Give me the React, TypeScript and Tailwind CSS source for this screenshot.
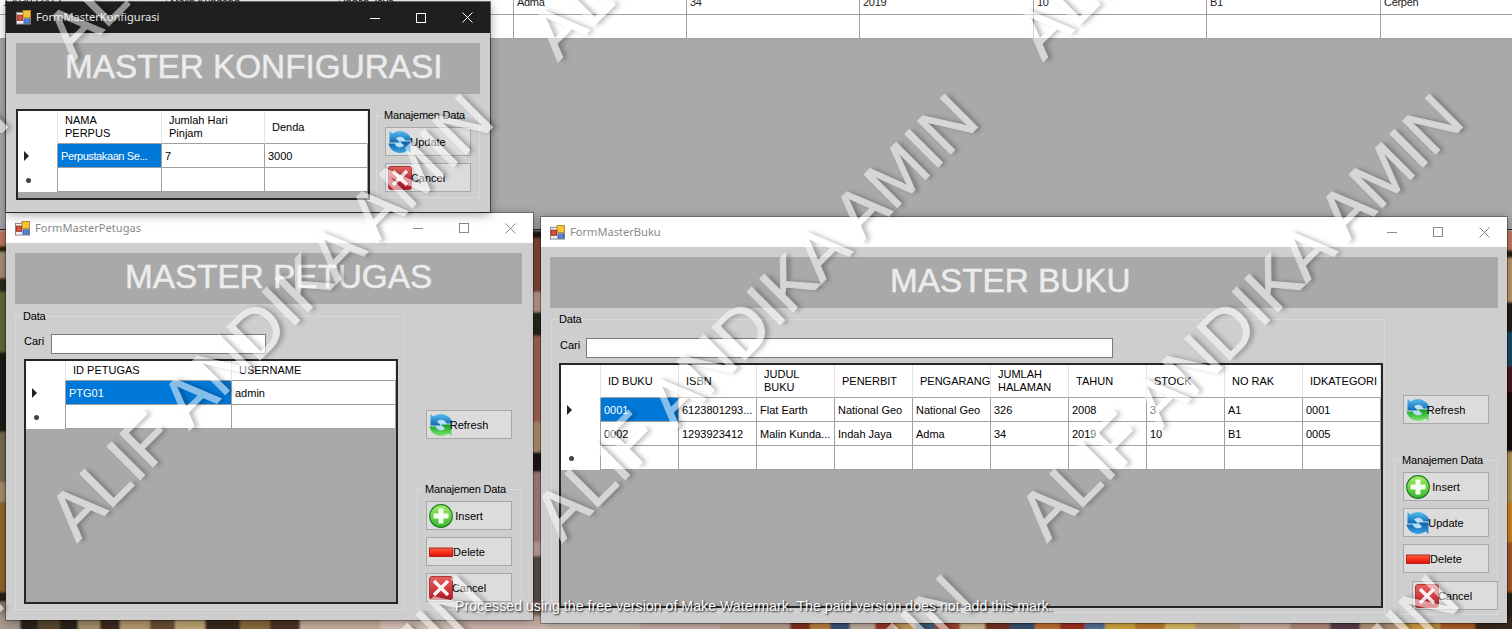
import React from 'react'

const shelf: [number, number, string][] = [
  [0, 20, '#a89c90'], [20, 38, '#2a211c'], [38, 60, '#5c4632'], [60, 78, '#2c221c'], [78, 100, '#a8906c'],
  [100, 120, '#3a2c22'], [120, 150, '#b89a70'], [150, 175, '#6a4e34'], [175, 205, '#c2a878'], [205, 240, '#3a2a1e'],
  [240, 270, '#8c6c3c'], [270, 300, '#4a3626'], [300, 380, '#c8b0a0'], [380, 460, '#d8c4b8'], [460, 540, '#cdb6aa'],
  [540, 640, '#d8c4b6'], [640, 720, '#cfb8ac'], [720, 790, '#c4a898'], [790, 810, '#8c3020'], [810, 830, '#c88840'],
  [830, 850, '#40587c'], [850, 875, '#c8b8a8'], [875, 895, '#a03828'], [895, 915, '#d8a860'], [915, 935, '#4a6888'],
  [935, 960, '#b04830'], [960, 985, '#e0c8a0'], [985, 1010, '#7a3428'], [1010, 1035, '#3c5474'], [1035, 1060, '#c87838'],
  [1060, 1085, '#a83020'], [1085, 1105, '#5878a0'], [1105, 1135, '#e0b040'], [1135, 1165, '#c88430'], [1165, 1195, '#e8c868'],
  [1195, 1240, '#c8a888'], [1240, 1290, '#d8b8a8'], [1290, 1330, '#b89080'], [1330, 1360, '#5c4048'], [1360, 1400, '#c0a080'],
  [1400, 1440, '#e0a848'], [1440, 1475, '#b86028'], [1475, 1512, '#3a2c1c'],
]

const leftStrip: [number, number, string][] = [
  [231, 246, '#c07860'], [246, 252, '#2a2418'], [252, 278, '#a89078'], [278, 292, '#2e2a18'], [292, 352, '#66683e'],
  [352, 432, '#1e1a16'], [432, 482, '#7c6a58'], [482, 502, '#a8906c'], [502, 592, '#94662e'], [592, 602, '#2a2014'],
  [602, 629, '#a89c90'],
]

const middleStrip: [number, number, string][] = [
  [231, 238, '#221c18'], [238, 292, '#8c4c3c'], [292, 312, '#cca898'], [312, 336, '#2a2a1c'], [336, 422, '#b06e58'],
  [422, 452, '#c09c78'], [452, 472, '#241814'], [472, 542, '#b08c88'], [542, 556, '#d0b0a8'], [556, 602, '#5c5450'],
  [602, 629, '#90786c'],
]

const rightStrip: [number, number, string][] = [
  [231, 250, '#c47c5c'], [250, 258, '#2c2418'], [258, 302, '#c09868'], [302, 332, '#241c14'], [332, 366, '#144c68'],
  [366, 392, '#4c1420'], [392, 452, '#1c0c10'], [452, 502, '#b8985c'], [502, 542, '#d08820'], [542, 592, '#a85a2c'],
  [592, 629, '#2c2414'],
]

const Wallpaper = () => (
  <svg className="absolute left-0 top-0" width="1512" height="629" viewBox="0 0 1512 629">
    <defs>
      <filter id="soft">
        <feGaussianBlur stdDeviation="1.2" />
      </filter>
    </defs>
    <g filter="url(#soft)">
      {leftStrip.map(([a, b, c]) => (
        <rect key={a} x="-4" y={a} width="14" height={b - a} fill={c} />
      ))}
      {middleStrip.map(([a, b, c]) => (
        <rect key={a} x="530" y={a} width="14" height={b - a} fill={c} />
      ))}
      {rightStrip.map(([a, b, c]) => (
        <rect key={a} x="1503" y={a} width="14" height={b - a} fill={c} />
      ))}
      {shelf.map(([a, b, c]) => (
        <rect key={a} x={a} y="616" width={b - a} height="18" fill={c} />
      ))}
    </g>
  </svg>
)

const FormIcon = () => (
  <svg width="15" height="15" viewBox="0 0 16 16" className="shrink-0">
    <rect x="0.5" y="2.5" width="15" height="12.5" fill="#f0f0f0" stroke="#808080" />
    <rect x="7.5" y="0.5" width="8" height="7.5" fill="#f4c43c" stroke="#b88c20" />
    <rect x="1.5" y="5.5" width="5.5" height="5.5" fill="#d8503c" stroke="#a03020" />
    <rect x="8.5" y="9.5" width="6" height="4.5" fill="#5c88d8" stroke="#345ca8" />
  </svg>
)

const Sync = ({ green = false }: { green?: boolean }) => (
  <svg width="24" height="24" viewBox="0 0 24 24">
    <defs>
      <linearGradient id="syncBlue" x1="0" y1="0" x2="0" y2="1">
        <stop offset="0" stopColor="#58bcee" />
        <stop offset="1" stopColor="#0f69b4" />
      </linearGradient>
      <linearGradient id="syncBlueLow" x1="0" y1="1" x2="0" y2="0">
        <stop offset="0" stopColor="#0c5ca4" />
        <stop offset="1" stopColor="#3ca4e4" />
      </linearGradient>
      <linearGradient id="syncGreen" x1="0" y1="1" x2="0" y2="0">
        <stop offset="0" stopColor="#149a28" />
        <stop offset="1" stopColor="#7ee86c" />
      </linearGradient>
    </defs>
    <circle cx="12" cy="12" r="7" fill="#b8e0f4" />
    <path
      d="M1.5 1 L1.5 12.5 L12 12.5 L8 8.6 A5.5 5.5 0 0 1 17.4 10.5 L23.6 10.5 A11.8 11.8 0 0 0 4.6 3.6 Z"
      fill="url(#syncBlue)"
    />
    <path
      transform="rotate(180 12 12)"
      d="M1.5 1 L1.5 12.5 L12 12.5 L8 8.6 A5.5 5.5 0 0 1 17.4 10.5 L23.6 10.5 A11.8 11.8 0 0 0 4.6 3.6 Z"
      fill={green ? 'url(#syncGreen)' : 'url(#syncBlueLow)'}
    />
  </svg>
)

const Plus = () => (
  <svg width="24" height="24" viewBox="0 0 24 24">
    <defs>
      <linearGradient id="plusGreen" x1="0" y1="0" x2="0" y2="1">
        <stop offset="0" stopColor="#a4ec68" />
        <stop offset="1" stopColor="#38b82c" />
      </linearGradient>
    </defs>
    <circle cx="12" cy="12" r="11.3" fill="url(#plusGreen)" stroke="#1c7c24" strokeWidth="1.2" />
    <path d="M9.5 4.5 H14.5 V9.5 H19.5 V14.5 H14.5 V19.5 H9.5 V14.5 H4.5 V9.5 H9.5 Z" fill="#f4fff0" />
  </svg>
)

const Minus = () => (
  <svg width="24" height="24" viewBox="0 0 24 24">
    <defs>
      <linearGradient id="barRed" x1="0" y1="0" x2="0" y2="1">
        <stop offset="0" stopColor="#e8664c" />
        <stop offset="0.4" stopColor="#ff3a20" />
        <stop offset="1" stopColor="#d80c0c" />
      </linearGradient>
    </defs>
    <rect x="0.5" y="8" width="23" height="8.5" fill="url(#barRed)" stroke="#b8281c" />
  </svg>
)

const Cross = () => (
  <svg width="24" height="24" viewBox="0 0 24 24">
    <defs>
      <linearGradient id="crossRed" x1="0" y1="0" x2="0" y2="1">
        <stop offset="0" stopColor="#e86060" />
        <stop offset="1" stopColor="#b81c28" />
      </linearGradient>
    </defs>
    <rect x="0.5" y="0.5" width="23" height="23" rx="2.5" fill="url(#crossRed)" stroke="#a8383c" />
    <path d="M5 5 L19 19 M19 5 L5 19" stroke="#fff4f4" strokeWidth="3.4" />
  </svg>
)

const Btn = ({ icon, label, className = '' }: { icon: React.ReactNode; label: string; className?: string }) => (
  <button className={`relative flex h-[29px] w-[86px] items-center justify-center border border-[#a8a8a8] bg-[#dcdcdc] text-[11px] text-black ${className}`}>
    <span className="absolute left-[2px] top-[2px]">{icon}</span>
    <span className="relative pt-[2px]">{label}</span>
  </button>
)

const Group = ({ label, className = '', children }: { label: string; className?: string; children: React.ReactNode }) => (
  <div className={`border border-[#d9d9d9] ${className}`}>
    <div className="-mt-[7px] ml-[7px] h-[13px] w-fit bg-[#cecece] text-[11px] leading-[13px] tracking-[-0.2px] text-black">{label}</div>
    {children}
  </div>
)

const Band = ({ title, className }: { title: string; className: string }) => (
  <div className={`flex h-[51px] items-center bg-[#a9a9a9] pb-[4px] text-[33.3px] text-[#ececec] [-webkit-text-stroke:0.5px_#ececec] ${className}`}>{title}</div>
)

const WinButtons = ({ color }: { color: string }) => (
  <div className={`ml-auto flex h-full ${color}`}>
    <span className="flex w-[46px] items-center justify-center">
      <svg width="10" height="10" viewBox="0 0 10 10" stroke="currentColor" fill="none"><path d="M0 5.5H10" /></svg>
    </span>
    <span className="flex w-[46px] items-center justify-center">
      <svg width="10" height="10" viewBox="0 0 10 10" stroke="currentColor" fill="none"><rect x="0.5" y="0.5" width="9" height="9" /></svg>
    </span>
    <span className="flex w-[46px] items-center justify-center">
      <svg width="11" height="11" viewBox="0 0 11 11" stroke="currentColor" fill="none"><path d="M0.5 0.5L10.5 10.5M10.5 0.5L0.5 10.5" /></svg>
    </span>
  </div>
)

const TitleBar = ({ title, dark = false }: { title: string; dark?: boolean }) => (
  <div className={`flex shrink-0 items-center font-['Noto_Sans',sans-serif] text-[11.1px] ${dark ? 'h-[31px] bg-[#1f1f1f] pl-[10px] text-[#e8e8e8]' : 'h-[30px] bg-white pl-[9px] text-[#8a8a8a]'}`}>
    <FormIcon />
    <span className="ml-[5px]">{title}</span>
    <WinButtons color={dark ? 'text-white' : 'text-[#8a8a8a]'} />
  </div>
)

type GridProps = {
  cols: string
  box: string
  headH: string
  headers: string[][]
  rows: React.ReactNode[][]
}

const DataGrid = ({ cols, box, headH, headers, rows }: GridProps) => (
  <div className={`shrink-0 border-2 border-[#262626] bg-[#a9a9a9] text-[11px] leading-[13px] text-black ${box}`}>
    <div className={`grid ${cols}`}>
      <div className={`border-r border-[#e4e4e4] bg-white ${headH}`} />
      {headers.map((h) => (
        <div key={h.join()} className="flex flex-col justify-center border-r border-b border-r-[#e4e4e4] border-b-[#a0a0a0] bg-white pl-[7px]">
          {h.map((line) => (
            <span key={line} className="whitespace-nowrap">{line}</span>
          ))}
        </div>
      ))}
      {rows.map((row, i) => (
        <React.Fragment key={i}>
          <div className="flex h-[24px] items-center border-r border-[#a0a0a0] bg-white pl-[6px]">
            {i === 0 && <span className="h-0 w-0 border-y-[5px] border-l-[5px] border-y-transparent border-l-[#222]" />}
            {i === rows.length - 1 && <span className="ml-[2px] h-[5px] w-[5px] rounded-full bg-[#444]" />}
          </div>
          {row.map((cell, j) => (
            <div
              key={j}
              className={`flex h-[24px] items-center overflow-hidden whitespace-nowrap border-r border-b border-[#a0a0a0] pl-[3px] pt-[2px] ${i === 0 && j === 0 ? 'bg-[#0078d7] text-white' : 'bg-white'}`}
            >
              {cell}
            </div>
          ))}
        </React.Fragment>
      ))}
    </div>
  </div>
)

const Search = ({ input, label }: { input: string; label: string }) => (
  <div className="flex text-[11px] text-black">
    <span className={`pt-[1px] leading-[13px] ${label}`}>Cari</span>
    <div className={`h-[20px] border border-[#7a7a7a] bg-white ${input}`} />
  </div>
)

const BackWindow = () => (
  <div className="absolute left-0 top-0 h-[230px] w-full border-b border-[#2a2420] bg-[#a9a9a9] text-[11px] leading-[13px] text-[#222]">
    <div className="flex h-[15px] overflow-hidden border-b border-[#a0a0a0] bg-white">
      {[
        ['w-[167px]', '1293923412'],
        ['w-[173px]', 'Malin Kundang'],
        ['w-[174px]', 'Indah Jaya'],
        ['w-[173px]', 'Adma'],
        ['w-[173px]', '34'],
        ['w-[174px]', '2019'],
        ['w-[173px]', '10'],
        ['w-[174px]', 'B1'],
        ['w-[132px]', 'Cerpen'],
      ].map(([w, text]) => (
        <div key={text} className={`shrink-0 border-r border-[#a0a0a0] pl-[3px] ${w}`}>
          <div className="-mt-[4px] tracking-[-0.3px]">{text}</div>
        </div>
      ))}
    </div>
    <div className="flex h-[24px] border-b border-[#a0a0a0] bg-white">
      {['w-[167px]', 'w-[173px]', 'w-[174px]', 'w-[173px]', 'w-[173px]', 'w-[174px]', 'w-[173px]', 'w-[174px]'].map((w, i) => (
        <div key={i} className={`shrink-0 border-r border-[#a0a0a0] ${w}`} />
      ))}
    </div>
  </div>
)

const KonfigWindow = () => (
  <div className="absolute left-[6px] top-[2px] flex h-[210px] w-[484px] flex-col bg-[#cecece] shadow-[0_0_0_1px_rgba(20,20,20,.6),0_2px_10px_rgba(0,0,0,.4)]">
    <TitleBar title="FormMasterKonfigurasi" dark />
    <div className="px-[10px] pt-[10px]">
      <Band title="MASTER KONFIGURASI" className="pl-[49px]" />
      <div className="mt-[15px] flex">
        <DataGrid
          cols="grid-cols-[40px_104px_103px_103px]"
          box="h-[91px] w-[354px]"
          headH="h-[33px]"
          headers={[['NAMA', 'PERPUS'], ['Jumlah Hari', 'Pinjam'], ['Denda']]}
          rows={[[<span className="tracking-[-0.4px]">Perpustakaan Se...</span>, '7', '3000'], ['', '', '']]}
        />
        <Group label="Manajemen Data" className="ml-[6px] mt-[6px] h-[83px] w-[104px]">
          <div className="ml-[8px] mt-[5px] flex flex-col gap-[7px]">
            <Btn icon={<Sync />} label="Update" />
            <Btn icon={<Cross />} label="Cancel" />
          </div>
        </Group>
      </div>
    </div>
  </div>
)

const PetugasWindow = () => (
  <div className="absolute left-[6px] top-[213px] flex h-[407px] w-[527px] flex-col bg-[#cecece] shadow-[0_0_0_1px_rgba(0,0,0,.3),0_2px_10px_rgba(0,0,0,.4)]">
    <TitleBar title="FormMasterPetugas" />
    <div className="pl-[9px] pr-[11px] pt-[10px]">
      <Band title="MASTER PETUGAS" className="pl-[110px]" />
      <div className="mt-[12px] flex">
        <Group label="Data" className="h-[294px] w-[390px]">
          <div className="ml-[8px] mt-[11px]">
            <Search label="w-[27px]" input="w-[215px]" />
            <div className="mt-[5px]">
              <DataGrid
                cols="grid-cols-[40px_166px_164px]"
                box="h-[245px] w-[374px]"
                headH="h-[20px]"
                headers={[['ID PETUGAS'], ['USERNAME']]}
                rows={[['PTG01', 'admin'], ['', '']]}
              />
            </div>
          </div>
        </Group>
        <div className="ml-[12px] w-[105px]">
          <Btn icon={<Sync green />} label="Refresh" className="ml-[9px] mt-[94px]" />
          <Group label="Manajemen Data" className="mt-[50px] h-[121px]">
            <div className="ml-[8px] mt-[5px] flex flex-col gap-[7px]">
              <Btn icon={<Plus />} label="Insert" />
              <Btn icon={<Minus />} label="Delete" />
              <Btn icon={<Cross />} label="Cancel" />
            </div>
          </Group>
        </div>
      </div>
    </div>
  </div>
)

const BukuWindow = () => (
  <div className="absolute left-[541px] top-[217px] flex h-[406px] w-[966px] flex-col bg-[#cecece] shadow-[0_0_0_1px_rgba(0,0,0,.3),0_2px_10px_rgba(0,0,0,.4)]">
    <TitleBar title="FormMasterBuku" />
    <div className="pl-[9px] pr-[9px] pt-[10px]">
      <Band title="MASTER BUKU" className="pl-[340px]" />
      <div className="ml-[1px] mt-[11px] flex">
        <Group label="Data" className="h-[294px] w-[834px]">
          <div className="ml-[7px] mt-[12px]">
            <div className="ml-[1px]">
              <Search label="w-[26px]" input="w-[527px]" />
            </div>
            <div className="mt-[5px]">
              <DataGrid
                cols="grid-cols-[40px_repeat(10,78px)]"
                box="h-[245px] w-[824px]"
                headH="h-[33px]"
                headers={[
                  ['ID BUKU'], ['ISBN'], ['JUDUL', 'BUKU'], ['PENERBIT'], ['PENGARANG'],
                  ['JUMLAH', 'HALAMAN'], ['TAHUN'], ['STOCK'], ['NO RAK'], ['IDKATEGORI'],
                ]}
                rows={[
                  ['0001', '6123801293...', 'Flat Earth', 'National Geo', 'National Geo', '326', '2008', '3', 'A1', '0001'],
                  ['0002', '1293923412', 'Malin Kunda...', 'Indah Jaya', 'Adma', '34', '2019', '10', 'B1', '0005'],
                  ['', '', '', '', '', '', '', '', '', ''],
                ]}
              />
            </div>
          </div>
        </Group>
        <div className="ml-[9px] w-[104px]">
          <Btn icon={<Sync green />} label="Refresh" className="ml-[9px] mt-[76px]" />
          <Group label="Manajemen Data" className="mt-[36px] h-[155px]">
            <div className="ml-[8px] mt-[5px] flex flex-col gap-[7px]">
              <Btn icon={<Plus />} label="Insert" />
              <Btn icon={<Sync />} label="Update" />
              <Btn icon={<Minus />} label="Delete" />
              <Btn icon={<Cross />} label="Cancel" className="ml-[9px] mt-[1px]" />
            </div>
          </Group>
        </div>
      </div>
    </div>
  </div>
)

const marks = [
  'left-[80px] top-[1px]', 'left-[565px] top-[1px]', 'left-[1050px] top-[1px]',
  'left-[-401px] top-[482px]', 'left-[84px] top-[482px]', 'left-[569px] top-[482px]', 'left-[1054px] top-[482px]', 'left-[1539px] top-[482px]',
  'left-[-405px] top-[963px]', 'left-[80px] top-[963px]', 'left-[565px] top-[963px]', 'left-[1050px] top-[963px]',
]

const Watermark = () => (
  <>
    {marks.map((pos) => (
      <div
        key={pos}
        className={`pointer-events-none absolute origin-bottom-left -rotate-45 whitespace-nowrap text-[68px] leading-none text-white opacity-[.52] [-webkit-text-stroke:1px_#fff] [text-shadow:3px_3px_5px_rgba(0,0,0,.55)] ${pos}`}
      >
        ALIF ANDIKA AMIN
      </div>
    ))}
    <div className="absolute left-[455px] top-[598px] whitespace-nowrap text-[14.2px] leading-[16px] text-white [text-shadow:1px_1px_2px_#000]">
      Processed using the free version of Make Watermark. The paid version does not add this mark.
    </div>
  </>
)

export default function App() {
  return (
    <div className="relative h-[629px] w-[1512px] overflow-hidden bg-[#a9a9a9] font-['Liberation_Sans',Arial,sans-serif]">
      <Wallpaper />
      <BackWindow />
      <PetugasWindow />
      <BukuWindow />
      <KonfigWindow />
      <Watermark />
    </div>
  )
}
